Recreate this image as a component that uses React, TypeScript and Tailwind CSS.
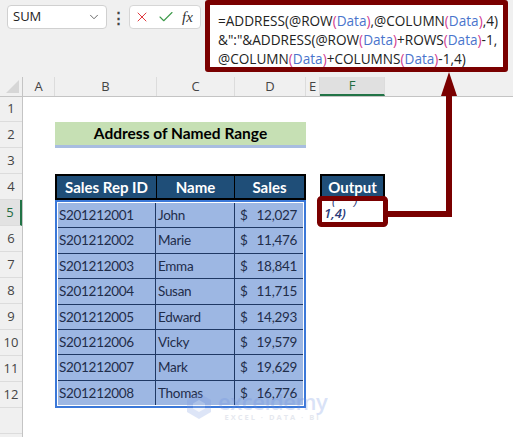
import { ChevronDown, X, Check } from "lucide-react"

const cellFont = { fontFamily: "Lato, 'Open Sans', sans-serif" }
const uiFont = { fontFamily: "'Open Sans', 'Noto Sans', sans-serif" }

const reps = [
  { id: "S201212001", name: "John", sales: "12,027" },
  { id: "S201212002", name: "Marie", sales: "11,476" },
  { id: "S201212003", name: "Emma", sales: "18,841" },
  { id: "S201212004", name: "Susan", sales: "11,715" },
  { id: "S201212005", name: "Edward", sales: "14,293" },
  { id: "S201212006", name: "Vicky", sales: "19,579" },
  { id: "S201212007", name: "Mark", sales: "19,629" },
  { id: "S201212008", name: "Thomas", sales: "16,776" },
]

const columns = [
  { label: "A", w: "w-[32px]" },
  { label: "B", w: "w-[102px]" },
  { label: "C", w: "w-[78px]" },
  { label: "D", w: "w-[71px]" },
  { label: "E", w: "w-[14px]" },
  { label: "F", w: "w-[65px]" },
]

// colour pieces of the formula like Excel does
function Ref() {
  return (
    <>
      <span className="text-[#d23a8f]">(</span>
      <span className="text-[#4a74cc]">Data</span>
      <span className="text-[#d23a8f]">)</span>
    </>
  )
}

function Toolbar() {
  return (
    <div className="flex items-start h-[77px] bg-[#f0f0f0]" style={uiFont}>
      <div className="mt-[5px] ml-[7px] w-[100px] h-[24px] bg-white border border-[#d0d0d0] rounded-[4px] flex items-center justify-between pl-[5px] pr-[5px] text-[13px] text-[#222]">
        <span>SUM</span>
        <ChevronDown className="w-[14px] h-[14px] text-[#555]" strokeWidth={1.5} />
      </div>
      <div className="mt-[8px] w-[22px] text-center text-[15px] leading-[18px] text-[#444] font-bold">⋮</div>
      <div className="mt-[5px] w-[72px] h-[24px] bg-white border border-[#d6d6d6] rounded-[4px] flex items-center gap-[7px] pl-[4px]">
        <X className="w-[16px] h-[16px] text-[#e0393e]" strokeWidth={1.5} />
        <Check className="w-[18px] h-[18px] text-[#3d9a4a]" strokeWidth={1.5} />
        <span className="text-[15px] italic text-[#333]" style={{ fontFamily: "'Liberation Serif', serif" }}>fx</span>
      </div>
      <div className="ml-[4px] w-[303px] h-[72px] bg-white border-[5px] border-[#7a0000] rounded-[3px] pl-[8px] pt-[6px] text-[13.6px] leading-[19px] text-[#222] whitespace-nowrap">
        <div>
          =ADDRESS(@ROW<Ref />,@COLUMN<Ref />,4)
        </div>
        <div>
          &amp;":"&amp;ADDRESS(@ROW<Ref />+ROWS<Ref />-1,
        </div>
        <div>
          @COLUMN<Ref />+COLUMNS<Ref />-1,4)
        </div>
      </div>
    </div>
  )
}

function ColumnHeaders() {
  return (
    <div className="flex h-[20px] bg-[#f0f0f0] border-b border-[#c4c4c4] text-[13px] text-[#444]" style={uiFont}>
      <div className="w-[23px] flex items-end justify-end pr-[3px] pb-[3px] border-r border-[#c4c4c4]">
        <div className="w-0 h-0 border-l-[13px] border-l-transparent border-b-[13px] border-b-[#d6d6d6]" />
      </div>
      {columns.map((c) => (
        <div
          key={c.label}
          className={
            c.w +
            " flex items-center justify-center border-r border-[#dcdcdc] " +
            (c.label === "F" ? "bg-[#e0e0e0] text-[#1e6b3f] border-b-2 border-b-[#217346]" : "")
          }
        >
          {c.label}
        </div>
      ))}
      <div className="flex-1" />
    </div>
  )
}

function RowHeaders() {
  const rows = Array.from({ length: 14 }, (_, i) => i + 1)
  return (
    <div className="w-[23px] flex flex-col bg-[#f0f0f0] border-r border-[#c4c4c4] text-[13px] text-[#444]" style={uiFont}>
      {rows.map((r) => (
        <div
          key={r}
          className={
            (r === 1 ? "h-[25px] " : "h-[26px] ") +
            "shrink-0 flex items-center justify-center border-b border-[#dcdcdc] " +
            (r === 5 ? "bg-[#e2e2e2] text-[#1e6b3f] border-r-2 border-r-[#217346]" : "")
          }
        >
          {r <= 12 ? r : ""}
        </div>
      ))}
    </div>
  )
}

function SalesTable() {
  return (
    <div className="col-start-2 col-span-3 row-start-4 row-span-9 flex flex-col" style={cellFont}>
      <div className="h-[26px] flex bg-[#1f4e78] border-2 border-black text-white font-bold text-[15px]">
        <div className="w-[100px] flex items-center justify-center border-r border-black">Sales Rep ID</div>
        <div className="w-[78px] flex items-center justify-center border-r border-black">Name</div>
        <div className="flex-1 flex items-center justify-center">Sales</div>
      </div>
      <div className="flex-1 border-2 border-[#3b78d8] bg-white p-px">
        <div className="h-full grid grid-cols-[97px_78px_1fr] grid-rows-8 gap-px bg-[#1f3864] text-[13.5px] tracking-[-0.3px] text-[#1f2d4a]">
          {reps.map((r) => (
            <>
              <div key={r.id} className="bg-[#9db7e3] flex items-center pl-px">{r.id}</div>
              <div key={r.id + "n"} className="bg-[#9db7e3] flex items-center pl-[2px]">{r.name}</div>
              <div key={r.id + "s"} className="bg-[#9db7e3] flex items-center justify-between pl-[5px] pr-[6px]">
                <span>$</span>
                <span>{r.sales}</span>
              </div>
            </>
          ))}
        </div>
      </div>
    </div>
  )
}

function Sheet() {
  return (
    <div className="flex-1 grid grid-cols-[32px_102px_78px_71px_14px_65px_1fr] grid-rows-[25px_repeat(13,26px)] bg-white">
      <div
        className="col-start-2 col-span-3 row-start-2 flex items-center justify-center bg-[#c6e0b4] border-b-[3px] border-[#a8bde0] text-[15.5px] font-bold text-black"
        style={cellFont}
      >
        Address of Named Range
      </div>
      <SalesTable />
      <div
        className="col-start-6 row-start-4 flex items-center justify-center bg-[#1f4e78] border-2 border-black text-white font-bold text-[15px]"
        style={cellFont}
      >
        Output
      </div>
      <div className="col-start-6 row-start-5 relative overflow-hidden bg-white" style={uiFont}>
        <div className="absolute left-[12px] top-[-9px] text-[13px] italic text-[#2a3a7a] tracking-[18px]">()</div>
        <div className="absolute left-[4px] bottom-[3px] text-[13px] italic font-semibold text-[#2a3a7a]">1,4)</div>
      </div>
    </div>
  )
}

function Watermark() {
  return (
    <div className="absolute left-[186px] top-[390px] flex items-center gap-[6px] opacity-25 pointer-events-none">
      <svg width="26" height="28" viewBox="0 0 26 28">
        <path d="M13 1 L25 8 L25 20 L13 27 L1 20 L1 8 Z" fill="#7d9be0" />
        <path d="M13 8 L19 11.5 L19 16.5 L13 20 L7 16.5 L7 11.5 Z" fill="#ffffff" opacity="0.7" />
      </svg>
      <div className="flex flex-col items-center leading-none" style={uiFont}>
        <span className="text-[22px] font-semibold text-[#6c8fe0] tracking-[-0.5px]">exceldemy</span>
        <span className="text-[7.5px] font-bold text-[#9aa6c2] tracking-[2px] mt-[2px]">EXCEL · DATA · BI</span>
      </div>
    </div>
  )
}

function Annotations() {
  return (
    <svg className="absolute inset-0 pointer-events-none" width="513" height="437" viewBox="0 0 513 437">
      <polyline points="449,94 449,214 387,214" fill="none" stroke="#7a0000" strokeWidth="6" />
      <polygon points="449,72 441,96 457,96" fill="#7a0000" />
      <rect x="319.5" y="198.5" width="66" height="26" rx="2" fill="none" stroke="#7a0000" strokeWidth="5" />
    </svg>
  )
}

export default function App() {
  return (
    <div className="relative w-[513px] h-[437px] overflow-hidden bg-white">
      <Toolbar />
      <ColumnHeaders />
      <div className="flex">
        <RowHeaders />
        <Sheet />
      </div>
      <Watermark />
      <Annotations />
    </div>
  )
}
